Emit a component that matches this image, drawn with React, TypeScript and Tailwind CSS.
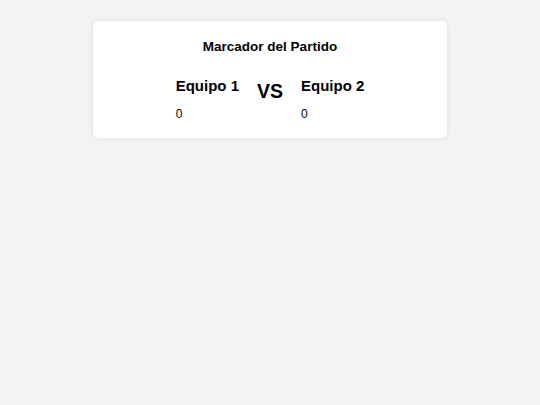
export default function App() {
  return (
    <div className="min-h-[405px] w-full bg-[#f4f4f4] pt-[21px]" style={{ fontFamily: '"Liberation Sans", Arial, sans-serif' }}>
      <div className="mx-auto w-[354px] rounded-[5px] bg-white pt-[18px] pb-[17px] shadow-[0_0_6px_rgba(0,0,0,0.1)]">
        <h1 className="text-center text-[13.5px] font-bold leading-[15.5px] text-black">Marcador del Partido</h1>
        <div className="mt-[22px] flex items-start justify-center gap-[18px]">
          <div>
            <h2 className="text-[15px] font-bold leading-[17px] text-black">Equipo 1</h2>
            <p className="mt-[13px] text-[12px] leading-[14px] text-black">0</p>
          </div>
          <div className="mt-[3px] text-[19.5px] font-bold leading-[22px] text-black">VS</div>
          <div>
            <h2 className="text-[15px] font-bold leading-[17px] text-black">Equipo 2</h2>
            <p className="mt-[13px] text-[12px] leading-[14px] text-black">0</p>
          </div>
        </div>
      </div>
    </div>
  );
}
